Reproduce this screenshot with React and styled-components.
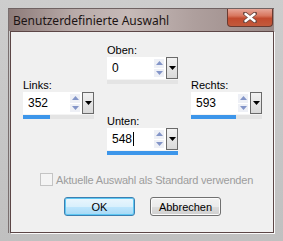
import React from 'react';
import styled, { createGlobalStyle } from 'styled-components';

const Global = createGlobalStyle`
  html, body { margin: 0; padding: 0; }
  body { width: 283px; height: 241px; overflow: hidden; background: #c3c3c3; }
`;

const Screen = styled.div`
  width: 283px;
  height: 241px;
  box-sizing: border-box;
  padding: 8px 9px 8px 8px;
  background: linear-gradient(180deg, #cdcdcd 0%, #c0c0c0 100%);
  display: flex;
`;

const Window = styled.div`
  flex: 1;
  display: flex;
  flex-direction: column;
  border-left: 1px solid #7a7070;
  border-top: 1px solid #6f6262;
`;

const TitleBar = styled.div`
  height: 22px;
  display: flex;
  align-items: flex-start;
  justify-content: space-between;
  padding-left: 4px;
  background: linear-gradient(90deg, #8d7b79 0%, #b9aba9 25%, #c6bab8 45%, #ae9f9d 70%, #9a8987 100%);
`;

const Title = styled.span`
  font-family: "Noto Sans", "Open Sans", sans-serif;
  font-size: 12px;
  line-height: 22px;
  color: #1c1414;
  margin-top: 1px;
`;

const CloseButton = styled.div`
  width: 46px;
  height: 18px;
  margin-right: 1px;
  box-sizing: border-box;
  border: 1px solid #6a3a30;
  border-top: none;
  border-radius: 0 0 4px 4px;
  background: linear-gradient(180deg, #e7a698 0%, #d8765e 40%, #c24a2e 55%, #c25a3c 100%);
  display: flex;
  align-items: center;
  justify-content: center;
`;

const Client = styled.div`
  flex: 1;
  display: flex;
  flex-direction: column;
  border: 1px solid #5c4646;
  margin-left: 1px;
  background: #f0f0f0;
  box-shadow: 1px 1px 0 #fafafa;
`;

const FieldsRow = styled.div`
  display: flex;
  align-items: flex-start;
  gap: 13px;
  padding: 12px 0 0 12px;
`;

const Column = styled.div`
  display: flex;
  flex-direction: column;
  gap: ${p => p.$gap || 0}px;
  margin-top: ${p => p.$offset || 0}px;
`;

const Field = styled.div`
  display: flex;
  flex-direction: column;
  width: 71px;
`;

const Label = styled.div`
  font-family: "Liberation Sans", Arial, sans-serif;
  font-size: 11px;
  line-height: 13px;
  color: #000;
`;

const Box = styled.div`
  display: flex;
  flex-direction: column;
  height: 27px;
  background: #fff;
`;

const EditRow = styled.div`
  flex: 1;
  display: flex;
  align-items: stretch;
`;

const Value = styled.div`
  flex: 1;
  font-family: "Liberation Sans", Arial, sans-serif;
  font-size: 12px;
  line-height: 14px;
  padding: 4px 0 0 5px;
  color: #000;
  display: flex;
  align-items: flex-start;
`;

const Caret = styled.span`
  display: inline-block;
  width: 1px;
  height: 14px;
  background: #000;
  margin-left: 1px;
`;

const Spin = styled.div`
  width: 10px;
  display: flex;
  flex-direction: column;
  gap: 1px;
  padding: 2px 0;
  margin-right: 2px;
`;

const SpinHalf = styled.div`
  flex: 1;
  background: #eef0f6;
  display: flex;
  align-items: center;
  justify-content: center;
`;

const DropButton = styled.div`
  width: 12px;
  box-sizing: border-box;
  border: 1px solid #6a6a6a;
  background: linear-gradient(180deg, #f2f2f2, #d9d9d9);
  display: flex;
  align-items: center;
  justify-content: center;
`;

const Bar = styled.div`
  height: 4px;
  background: #e4e4e4;
  border-top: 1px solid #f4f4f4;
`;

const BarFill = styled.div`
  height: 100%;
  background: #3d96ea;
`;

const CheckRow = styled.div`
  display: flex;
  align-items: center;
  gap: 3px;
  padding-left: 29px;
  margin-top: 18px;
`;

const CheckBox = styled.div`
  width: 11px;
  height: 11px;
  border: 1px solid #c4c4c4;
  background: #f4f4f4;
`;

const CheckLabel = styled.span`
  font-family: "Liberation Sans", Arial, sans-serif;
  font-size: 11px;
  letter-spacing: -0.2px;
  color: #9d9d9d;
`;

const ButtonRow = styled.div`
  display: flex;
  gap: 15px;
  padding-left: 53px;
  margin-top: 11px;
`;

const Button = styled.div`
  width: 71px;
  height: 19px;
  box-sizing: border-box;
  border-radius: 3px;
  border: 1px solid ${p => (p.$default ? '#3c7fb1' : '#707070')};
  box-shadow: ${p => (p.$default ? 'inset 0 0 0 1px #5ec8f3' : 'inset 0 0 0 1px #fbfbfb')};
  background: ${p =>
    p.$default
      ? 'linear-gradient(180deg, #eaf6fd 0%, #d9f0fc 50%, #bee6fd 51%, #a7d9f5 100%)'
      : 'linear-gradient(180deg, #f2f2f2 0%, #ebebeb 50%, #dddddd 51%, #cfcfcf 100%)'};
  font-family: "Liberation Sans", Arial, sans-serif;
  font-size: 11px;
  display: flex;
  align-items: center;
  justify-content: center;
  color: #000;
`;

const Up = () => (
  <svg width="7" height="4" viewBox="0 0 7 4"><path d="M0 4 L3.5 0 L7 4 Z" fill="#8395c8" /></svg>
);
const Down = () => (
  <svg width="7" height="4" viewBox="0 0 7 4"><path d="M0 0 L3.5 4 L7 0 Z" fill="#8395c8" /></svg>
);
const Tri = () => (
  <svg width="7" height="4" viewBox="0 0 7 4"><path d="M0 0 L3.5 4 L7 0 Z" fill="#000" /></svg>
);

const NumField = ({ label, value, fill, caret }) => (
  <Field>
    <Label>{label}</Label>
    <Box>
      <EditRow>
        <Value>
          {value}
          {caret && <Caret />}
        </Value>
        <Spin>
          <SpinHalf><Up /></SpinHalf>
          <SpinHalf><Down /></SpinHalf>
        </Spin>
        <DropButton><Tri /></DropButton>
      </EditRow>
      <Bar>
        <BarFill style={{ width: `${fill}%` }} />
      </Bar>
    </Box>
  </Field>
);

export default function App() {
  return (
    <>
      <Global />
      <Screen>
        <Window>
          <TitleBar>
            <Title>Benutzerdefinierte Auswahl</Title>
            <CloseButton>
              <svg width="14" height="11" viewBox="0 0 14 11">
                <path d="M2 1.5 L12 9.5 M12 1.5 L2 9.5" stroke="#6d4840" strokeWidth="4" strokeLinecap="round" />
                <path d="M2.5 2 L11.5 9 M11.5 2 L2.5 9" stroke="#ffffff" strokeWidth="2.4" strokeLinecap="round" />
              </svg>
            </CloseButton>
          </TitleBar>
          <Client>
            <FieldsRow>
              <Column $offset={35}>
                <NumField label="Links:" value="352" fill={38} />
              </Column>
              <Column $gap={31}>
                <NumField label="Oben:" value="0" fill={0} />
                <NumField label="Unten:" value="548" fill={100} caret />
              </Column>
              <Column $offset={35}>
                <NumField label="Rechts:" value="593" fill={64} />
              </Column>
            </FieldsRow>
            <CheckRow>
              <CheckBox />
              <CheckLabel>Aktuelle Auswahl als Standard verwenden</CheckLabel>
            </CheckRow>
            <ButtonRow>
              <Button $default>OK</Button>
              <Button>Abbrechen</Button>
            </ButtonRow>
          </Client>
        </Window>
      </Screen>
    </>
  );
}
